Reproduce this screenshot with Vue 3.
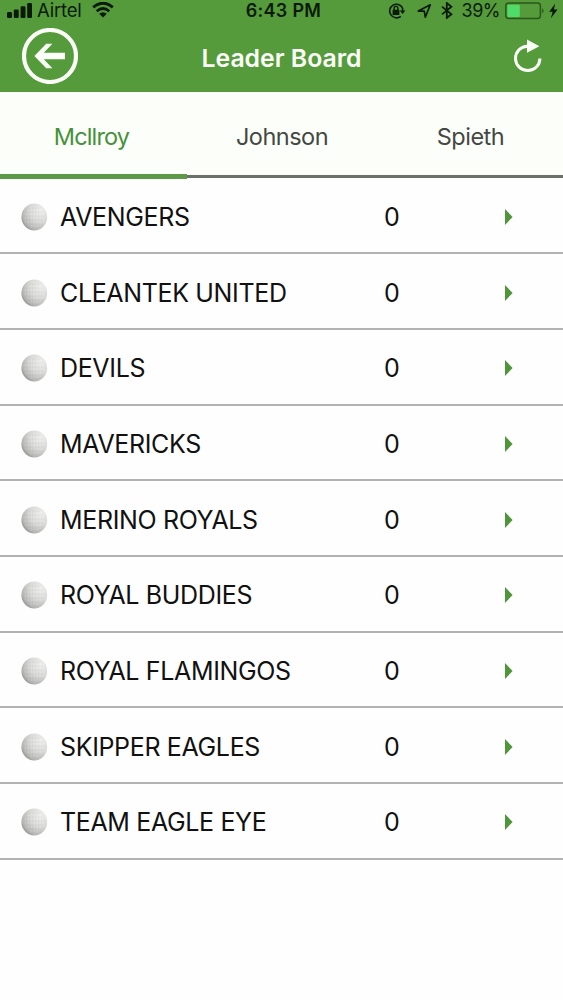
<template>
  <div class="screen">
    <header class="header">
      <div class="status">
        <div class="carrier">
          <svg class="signal" width="25" height="16" viewBox="0 0 25 16">
            <rect x="0" y="10" width="5" height="6" rx="1.2" />
            <rect x="6.8" y="7.4" width="4.9" height="8.6" rx="1.2" />
            <rect x="13.6" y="4.2" width="4.9" height="11.8" rx="1.2" />
            <rect x="20.2" y="1" width="4.8" height="15" rx="1.2" />
          </svg>
          <span class="carrier-name">Airtel</span>
          <svg class="wifi" width="22" height="16" viewBox="0 0 22 16">
            <path d="M1.2 5.3Q11-3 20.8 5.3" fill="none" stroke="#0b1a07" stroke-width="2.9" />
            <path d="M4.7 9.2Q11 3.8 17.3 9.2" fill="none" stroke="#0b1a07" stroke-width="2.7" />
            <path d="M7.2 11.8Q11 8.6 14.8 11.8L11 15.6Z" />
          </svg>
        </div>
        <span class="clock">6:43 PM</span>
        <div class="indicators">
          <svg class="lock" width="18" height="16" viewBox="0 0 18 16">
            <path d="M14.6 5A6.8 6.8 0 1 0 12.8 13.3" fill="none" stroke="#0b1a07" stroke-width="1.6" />
            <path d="M11.8 7.4H17.4L14.6 11Z" />
            <path d="M14.6 5V8" fill="none" stroke="#0b1a07" stroke-width="1.6" />
            <rect x="4.6" y="6.8" width="6.8" height="5.2" rx="0.6" />
            <path d="M6.1 7V5.3a1.9 1.9 0 0 1 3.8 0V7" fill="none" stroke="#0b1a07" stroke-width="1.4" />
          </svg>
          <svg class="location" width="15" height="16" viewBox="0 0 15 16">
            <path d="M1.3 8.1L13.3 1.8L8.3 14.2L7.3 8.2Z" fill="none" stroke="#0b1a07" stroke-width="1.7" stroke-linejoin="round" />
          </svg>
          <svg class="bluetooth" width="12" height="17" viewBox="0 0 12 17">
            <path d="M1 4.6L10.4 12.2L5.8 16V1L10.4 4.8L1 12.4" fill="none" stroke="#0b1a07" stroke-width="1.8" />
          </svg>
          <span class="percent">39%</span>
          <svg class="battery" width="54" height="18" viewBox="0 0 54 18">
            <rect x="0.8" y="1" width="34.6" height="15.6" rx="3" fill="none" stroke="#2a581c" stroke-width="1.5" />
            <rect x="2.4" y="2.7" width="12.4" height="12.2" rx="1" fill="#4fda69" />
            <path d="M37.2 6Q40 8.8 37.2 11.6Z" fill="#2a581c" />
            <path d="M50.2 1.5L44.2 9.8H47.6L45.9 16.3L52.6 7.5H48.9Z" />
          </svg>
        </div>
      </div>
      <div class="navbar">
        <button class="back" aria-label="Back">
          <svg width="56" height="56" viewBox="0 0 56 56">
            <circle cx="28" cy="28" r="26" fill="none" stroke="#fbfff8" stroke-width="4.2" />
            <path d="M12.4 28L24.2 15.8H30.4L21.8 24.7H43V31.2H21.8L30.4 40.2H24.2Z" fill="#fbfff8" />
          </svg>
        </button>
        <h1 class="title">Leader Board</h1>
        <button class="refresh" aria-label="Refresh">
          <svg width="30" height="34" viewBox="0 0 30 34">
            <path d="M14.2 7.2A12.2 12.2 0 1 0 26.9 19.4" fill="none" stroke="#fbfff8" stroke-width="3" />
            <path d="M14 0.5L26.4 7.3L14 13.8Z" fill="#fbfff8" />
          </svg>
        </button>
      </div>
    </header>

    <nav class="tabs">
      <button
        v-for="tab in tabs"
        :key="tab"
        class="tab"
        :class="{ active: tab === activeTab }"
        @click="activeTab = tab"
      >
        {{ tab }}
      </button>
    </nav>

    <ul class="teams">
      <li v-for="team in teams" :key="team.name" class="team">
        <svg class="ball" width="28" height="28" viewBox="0 0 28 28">
          <defs>
            <radialGradient id="shade" cx="0.76" cy="0.26" r="0.88">
              <stop offset="0" stop-color="#eeeeed" />
              <stop offset="0.5" stop-color="#d8d8d7" />
              <stop offset="0.85" stop-color="#b4b4b3" />
              <stop offset="1" stop-color="#8c8c8b" />
            </radialGradient>
            <pattern id="dimples" width="3" height="4" patternUnits="userSpaceOnUse">
              <circle cx="0.8" cy="1" r="0.6" fill="#a6a6a6" />
              <circle cx="2.3" cy="3" r="0.6" fill="#f6f6f6" />
            </pattern>
          </defs>
          <ellipse cx="14.3" cy="14" rx="12.9" ry="13.5" fill="url(#shade)" />
          <circle cx="14.3" cy="14" r="10.5" fill="url(#dimples)" opacity="0.4" />
        </svg>
        <span class="name">{{ team.name }}</span>
        <span class="score">{{ team.score }}</span>
        <svg class="arrow" width="8" height="16" viewBox="0 0 8 16">
          <path d="M0 0L7.6 8L0 16Z" fill="#50953a" />
        </svg>
      </li>
    </ul>
  </div>
</template>

<script setup>
import { ref } from "vue"

const tabs = ["Mcllroy", "Johnson", "Spieth"]
const activeTab = ref("Mcllroy")

const teams = [
  { name: "AVENGERS", score: 0 },
  { name: "CLEANTEK UNITED", score: 0 },
  { name: "DEVILS", score: 0 },
  { name: "MAVERICKS", score: 0 },
  { name: "MERINO ROYALS", score: 0 },
  { name: "ROYAL BUDDIES", score: 0 },
  { name: "ROYAL FLAMINGOS", score: 0 },
  { name: "SKIPPER EAGLES", score: 0 },
  { name: "TEAM EAGLE EYE", score: 0 },
]
</script>

<style>
body {
  margin: 0;
  background: #fefefe;
}
</style>

<style scoped>
.screen {
  width: 563px;
  height: 1000px;
  overflow: hidden;
  background: #fefefe;
  font-family: Inter, "Liberation Sans", sans-serif;
  color: #111;
}
button {
  margin: 0;
  padding: 0;
  border: 0;
  background: none;
  font: inherit;
  color: inherit;
}
svg {
  display: block;
  flex: none;
}
.header {
  height: 92px;
  background: #559b3b;
}
.status {
  display: grid;
  grid-template-columns: 1fr auto 1fr;
  align-items: center;
  height: 21px;
  padding: 0 4px 0 7px;
  color: #0b1a07;
  fill: #0b1a07;
  font-size: 18px;
  line-height: 21px;
}
.carrier,
.indicators {
  display: flex;
  align-items: center;
}
.signal,
.wifi {
  margin-top: -2px;
}
.indicators {
  justify-content: flex-end;
}
.carrier-name {
  margin-left: 5px;
  width: 44px;
  font-size: 18.5px;
  letter-spacing: -0.2px;
  white-space: nowrap;
}
.wifi {
  margin-left: 11px;
}
.clock {
  margin-left: 1px;
  font-weight: 600;
  letter-spacing: 0.3px;
}
.lock {
  margin-right: 1px;
}
.location {
  margin-left: 10px;
}
.bluetooth {
  margin-left: 9px;
}
.percent {
  margin: 0 5px 0 9px;
  letter-spacing: -0.5px;
}
.navbar {
  display: grid;
  grid-template-columns: 1fr auto 1fr;
  align-items: center;
  height: 70px;
  padding: 0 20px 0 22px;
}
.back {
  justify-self: start;
}
.refresh {
  justify-self: end;
}
.title {
  margin: 4px 2px 0 0;
  color: #fbfff8;
  font-size: 24.8px;
  font-weight: 600;
}
.tabs {
  display: grid;
  grid-template-columns: 187px 1fr 187px;
  height: 86px;
  background: #fcfff9;
  box-shadow: inset 0 -3px #6b706a;
}
.tab {
  height: 87px;
  padding: 1px 0 0 1px;
  color: #444743;
  font-size: 23.5px;
  letter-spacing: -0.5px;
}
.tab:last-child {
  padding-left: 2px;
}
.tab.active {
  padding: 1px 4px 0 0;
  box-shadow: inset 0 -5px #5c9a47;
  color: #46913a;
  letter-spacing: -0.85px;
}
.teams {
  margin: 0;
  padding: 0.6px 0 0;
  list-style: none;
}
.team {
  display: grid;
  grid-template-columns: 40px 321px 123.5px 8px;
  align-items: center;
  box-sizing: border-box;
  height: 75.7px;
  padding: 3px 0 0 20px;
  border-bottom: 2px solid #b2b2b2;
}
.name {
  font-size: 25px;
  letter-spacing: -0.35px;
  white-space: nowrap;
}
.score {
  padding-left: 3px;
  font-size: 25px;
}
</style>
